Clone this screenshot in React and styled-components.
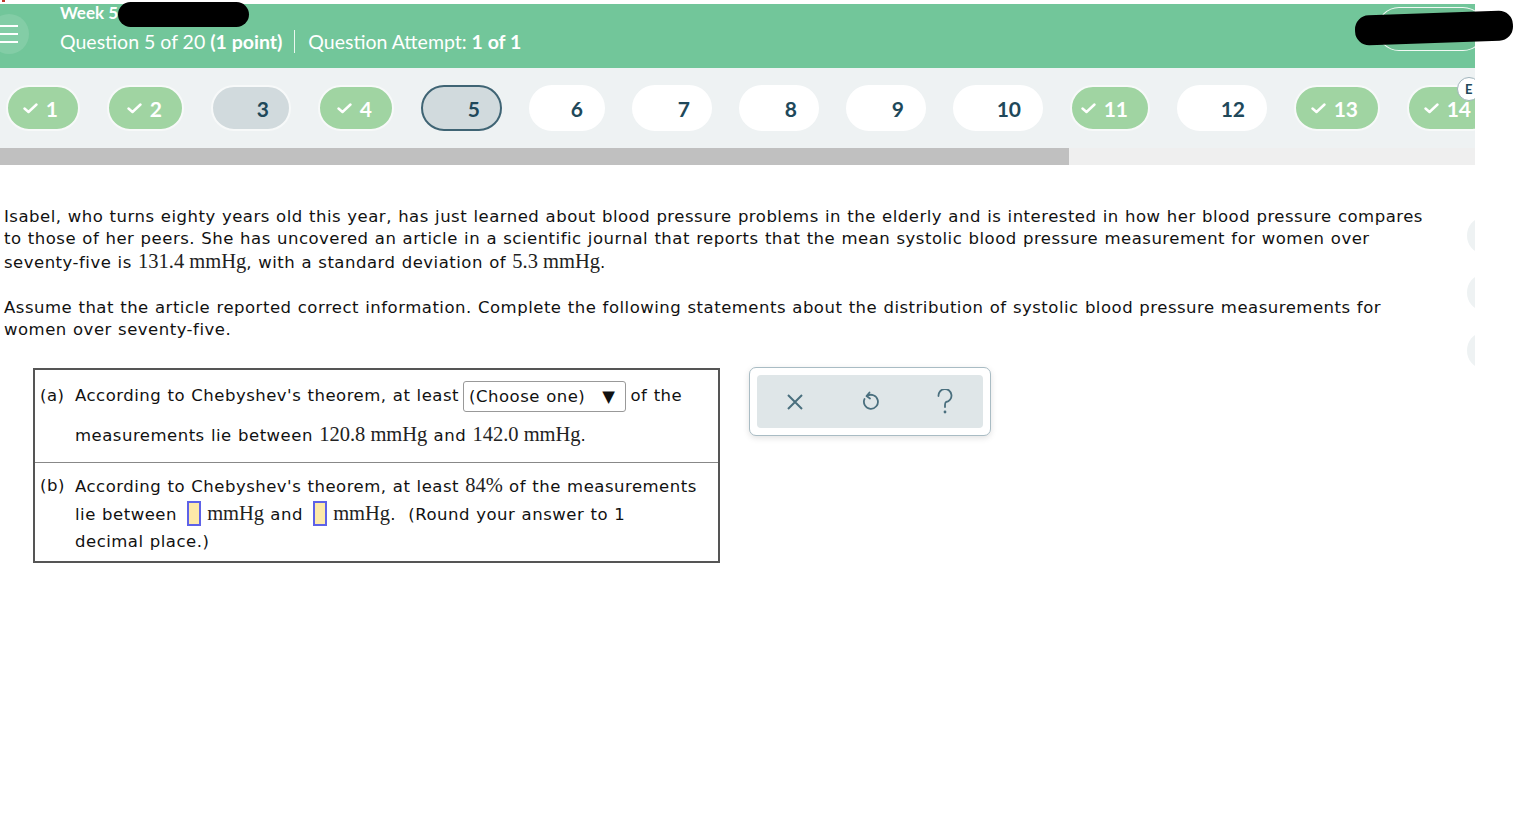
import React from 'react'
import styled, { createGlobalStyle, css } from 'styled-components'

const Global = createGlobalStyle`
  html, body { margin: 0; padding: 0; background: #fff; }
  body { font-family: "DejaVu Sans", Verdana, sans-serif; }
`

const Page = styled.div`
  width: 1513px;
  height: 824px;
  position: relative;
  overflow: hidden;
  background: #fff;
`

const Frame = styled.div`
  width: 1475px;
  height: 824px;
  position: relative;
  overflow: hidden;
`

const TopStrip = styled.div`
  height: 4px;
  position: relative;
  &::before {
    content: '';
    position: absolute;
    left: 2px;
    top: 0;
    width: 3px;
    height: 2px;
    background: #c0392b;
  }
`

const Header = styled.header`
  height: 64px;
  background: #72c69a;
  display: flex;
  align-items: center;
  position: relative;
  font-family: Lato, "Open Sans", sans-serif;
  color: #fff;
`

const Burger = styled.div`
  width: 40px;
  height: 40px;
  margin-left: -11px;
  margin-top: -4px;
  border-radius: 50%;
  background: rgba(255, 255, 255, 0.12);
  display: flex;
  flex-direction: column;
  justify-content: center;
  gap: 6px;
  padding-left: 11px;
  box-sizing: border-box;
  span {
    display: block;
    width: 18px;
    height: 2px;
    background: #fff;
  }
`

const Titles = styled.div`
  margin-left: 31px;
  display: flex;
  flex-direction: column;
  align-self: stretch;
`

const Week = styled.div`
  font-size: 17px;
  font-weight: 700;
  line-height: 18px;
  height: 20px;
`

const QLine = styled.div`
  display: flex;
  align-items: center;
  font-size: 19.5px;
  margin-top: 6px;
  b { font-weight: 700; }
`

const Sep = styled.span`
  display: inline-block;
  width: 1px;
  height: 23px;
  background: rgba(255, 255, 255, 0.85);
  margin: 0 13px 0 12px;
`

const OutlinePill = styled.div`
  position: absolute;
  right: -10px;
  top: 3px;
  width: 106px;
  height: 42px;
  border: 1px solid rgba(255, 255, 255, 0.9);
  border-radius: 22px;
  background: #6ebf93;
`

const Redact = styled.div`
  position: absolute;
  background: #000;
  border-radius: 14px;
  ${p => p.$tilt && css`transform: rotate(${p.$tilt}deg);`}
`

const Nav = styled.nav`
  height: 80px;
  background: #eef2f3;
  display: flex;
  align-items: center;
  gap: 27px;
  padding-left: 6px;
  overflow: hidden;
  position: relative;
`

const Pill = styled.div`
  flex: none;
  height: 46px;
  box-sizing: border-box;
  border-radius: 23px;
  display: flex;
  align-items: center;
  justify-content: flex-end;
  gap: 8px;
  padding-right: 20px;
  font-family: Lato, "Open Sans", sans-serif;
  font-size: 21px;
  font-weight: 700;
  color: #20485a;
  border: 2px solid #f7f9f9;
  background: #fff;
  ${p => p.$state === 'done' && css`
    background: #a0d4a2;
    color: #fff;
  `}
  ${p => p.$state === 'seen' && css`
    background: #d1dadd;
  `}
  ${p => p.$state === 'current' && css`
    background: #d1dadd;
    border: 2px solid #3f6474;
  `}
  ${p => p.$state === 'open' && css`
    border-color: #fff;
  `}
`

const Badge = styled.div`
  position: absolute;
  left: 1457px;
  top: 9px;
  width: 24px;
  height: 24px;
  border-radius: 50%;
  background: #fff;
  border: 1px solid #9fb3bb;
  font-family: Lato, sans-serif;
  font-weight: 700;
  font-size: 13px;
  color: #20485a;
  display: flex;
  align-items: center;
  padding-left: 7px;
  box-sizing: border-box;
`

const Progress = styled.div`
  height: 17px;
  background: #efefef;
`

const ProgressFill = styled.div`
  height: 100%;
  background: #c0c0c0;
`

const Content = styled.main`
  padding: 41px 0 0 4px;
  font-size: 16.5px;
  letter-spacing: 0.5px;
  word-spacing: 0.5px;
  line-height: 22px;
  color: #111;
  position: relative;
`

const Para = styled.p`
  margin: 0 0 ${p => p.$mb || 0}px;
  white-space: nowrap;
`

const M = styled.span`
  font-family: "Liberation Serif", "Times New Roman", serif;
  font-size: 20.5px;
  letter-spacing: 0;
  word-spacing: 0;
  color: #222;
`

const Row = styled.div`
  display: flex;
  align-items: flex-start;
  gap: 29px;
  margin-top: 27px;
  margin-left: 29px;
`

const Table = styled.div`
  width: 687px;
  border: 2px solid #555;
  box-sizing: border-box;
`

const Part = styled.div`
  display: flex;
  padding: ${p => p.$pad};
  line-height: ${p => p.$lh};
  & + & { border-top: 1px solid #888; }
`

const Label = styled.div`
  width: 35px;
  flex: none;
  padding-left: 5px;
`

const PartBody = styled.div`
  flex: 1;
`

const Select = styled.span`
  display: inline-flex;
  align-items: center;
  height: 31px;
  box-sizing: border-box;
  border: 1px solid #999;
  border-radius: 3px;
  padding: 0 9px 0 5px;
  margin: 0 5px 0 4px;
  vertical-align: middle;
  gap: 17px;
  line-height: 20px;
`

const Blank = styled.span`
  display: inline-block;
  width: 10px;
  height: 21px;
  background: #fde9a9;
  border: 2px solid #5e62e8;
  vertical-align: -6px;
  margin: 0 6px 0 4px;
`

const Tools = styled.div`
  width: 242px;
  height: 69px;
  margin-top: -1px;
  box-sizing: border-box;
  border: 1px solid #a9bcc4;
  border-radius: 7px;
  padding: 7px;
  box-shadow: 0 2px 6px rgba(0, 0, 0, 0.12);
  background: #fff;
`

const ToolInner = styled.div`
  height: 100%;
  background: #dfe6e8;
  border-radius: 4px;
  display: grid;
  grid-template-columns: repeat(3, 1fr);
  align-items: center;
  justify-items: center;
  color: #4a6f7e;
`

const SideNub = styled.div`
  position: absolute;
  left: 1467px;
  width: 30px;
  height: 35px;
  border-radius: 50%;
  background: #eef2f3;
  top: ${p => p.$top}px;
`

const Check = () => (
  <svg width="15" height="11" viewBox="0 0 15 11">
    <path d="M1.5 5.5 L5.5 9 L13.5 1.5" fill="none" stroke="#fff" strokeWidth="2.4" strokeLinecap="round" strokeLinejoin="round" />
  </svg>
)

const pills = [
  { n: 1, s: 'done', w: 74 },
  { n: 2, s: 'done', w: 77 },
  { n: 3, s: 'seen', w: 80 },
  { n: 4, s: 'done', w: 76 },
  { n: 5, s: 'current', w: 81 },
  { n: 6, s: 'open', w: 76 },
  { n: 7, s: 'open', w: 80 },
  { n: 8, s: 'open', w: 80 },
  { n: 9, s: 'open', w: 80 },
  { n: 10, s: 'open', w: 90 },
  { n: 11, s: 'done', w: 80 },
  { n: 12, s: 'open', w: 90 },
  { n: 13, s: 'done', w: 86 },
  { n: 14, s: 'done', w: 86 },
]

export default function App() {
  return (
    <Page>
      <Global />
      <Frame>
        <TopStrip />
        <Header>
          <Burger><span /><span /><span /></Burger>
          <Titles>
            <Week>Week 5</Week>
            <QLine>
              Question 5 of 20&nbsp;<b>(1 point)</b>
              <Sep />
              Question Attempt:&nbsp;<b>1 of 1</b>
            </QLine>
          </Titles>
          <OutlinePill />
        </Header>
        <Nav>
          {pills.map(p => (
            <Pill key={p.n} $state={p.s} style={{ width: p.w }}>
              {p.s === 'done' && <Check />}
              {p.n}
            </Pill>
          ))}
          <Badge>E</Badge>
        </Nav>
        <Progress>
          <ProgressFill style={{ width: `${(1069 / 1475) * 100}%` }} />
        </Progress>
        <Content>
          <Para $mb={23}>
            Isabel, who turns eighty years old this year, has just learned about blood pressure problems in the elderly and is interested in how her blood pressure compares<br />
            to those of her peers. She has uncovered an article in a scientific journal that reports that the mean systolic blood pressure measurement for women over<br />
            seventy-five is <M>131.4 mmHg</M>, with a standard deviation of <M>5.3 mmHg</M>.
          </Para>
          <Para>
            Assume that the article reported correct information. Complete the following statements about the distribution of systolic blood pressure measurements for<br />
            women over seventy-five.
          </Para>
          <Row>
            <Table>
              <Part $pad="7px 0 7px" $lh="38px">
                <Label>(a)</Label>
                <PartBody>
                  According to Chebyshev's theorem, at least
                  <Select>(Choose one) <span>▼</span></Select>
                  of the<br />
                  measurements lie between <M>120.8 mmHg</M> and <M>142.0 mmHg</M>.
                </PartBody>
              </Part>
              <Part $pad="9px 0 6px" $lh="27px">
                <Label>(b)</Label>
                <PartBody>
                  According to Chebyshev's theorem, at least <M>84%</M> of the measurements<br />
                  lie between <Blank /><M>mmHg</M> and <Blank /><M>mmHg</M>.&nbsp; (Round your answer to 1<br />
                  decimal place.)
                </PartBody>
              </Part>
            </Table>
            <Tools>
              <ToolInner>
                <svg width="18" height="18" viewBox="0 0 18 18">
                  <path d="M2 2 L16 16 M16 2 L2 16" stroke="currentColor" strokeWidth="2" fill="none" />
                </svg>
                <svg width="18" height="22" viewBox="0 0 18 22">
                  <path d="M6 5 A7 7 0 1 1 3.5 8" stroke="currentColor" strokeWidth="1.8" fill="none" strokeLinecap="round" />
                  <path d="M8.5 1.5 L5.5 5 L9 7.5" stroke="currentColor" strokeWidth="1.8" fill="none" strokeLinecap="round" strokeLinejoin="round" />
                </svg>
                <svg width="18" height="26" viewBox="0 0 18 26">
                  <path d="M2.5 7 A6.5 6.5 0 1 1 10 13 Q9 13.6 9 16 L9 18" stroke="currentColor" strokeWidth="1.8" fill="none" strokeLinecap="round" />
                  <circle cx="9" cy="23" r="1.4" fill="currentColor" />
                </svg>
              </ToolInner>
            </Tools>
          </Row>
          <SideNub $top={53} />
          <SideNub $top={110} />
          <SideNub $top={168} />
        </Content>
        <Redact style={{ left: 118, top: 2, width: 131, height: 25 }} />
      </Frame>
      <Redact $tilt={-2} style={{ left: 1355, top: 13, width: 158, height: 30 }} />
    </Page>
  )
}
